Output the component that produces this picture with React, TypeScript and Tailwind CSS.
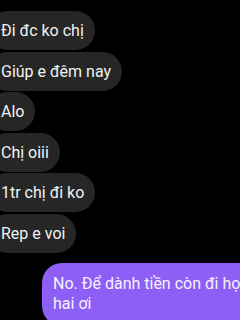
const incoming = [
  "Đi đc ko chị",
  "Giúp e đêm nay",
  "Alo",
  "Chị oiii",
  "1tr chị đi ko",
  "Rep e voi",
];

export default function App() {
  return (
    <div
      className="h-[320px] w-[240px] overflow-hidden bg-black"
      style={{ fontFamily: "Roboto, 'Noto Sans', sans-serif" }}
    >
      <div className="flex flex-col items-start gap-[1.5px] pt-[11px]">
        {incoming.map((msg) => (
          <div
            key={msg}
            className="-ml-[12px] rounded-[20px] bg-[#262626] py-[9px] pl-[13px] pr-[11px] text-[16px] leading-[21px] whitespace-nowrap text-[#f2f2f2]"
          >
            {msg}
          </div>
        ))}
      </div>

      <div className="mt-[10.5px] ml-[42px] w-[240px] rounded-[20px] bg-[#8d5ff5] pt-[10.5px] pb-[12px] pl-[11px] text-[16px] leading-[20px] text-[#f7f3ff]">
        <div className="whitespace-nowrap">No. Để dành tiền còn đi học</div>
        <div>hai ơi</div>
      </div>
    </div>
  );
}
